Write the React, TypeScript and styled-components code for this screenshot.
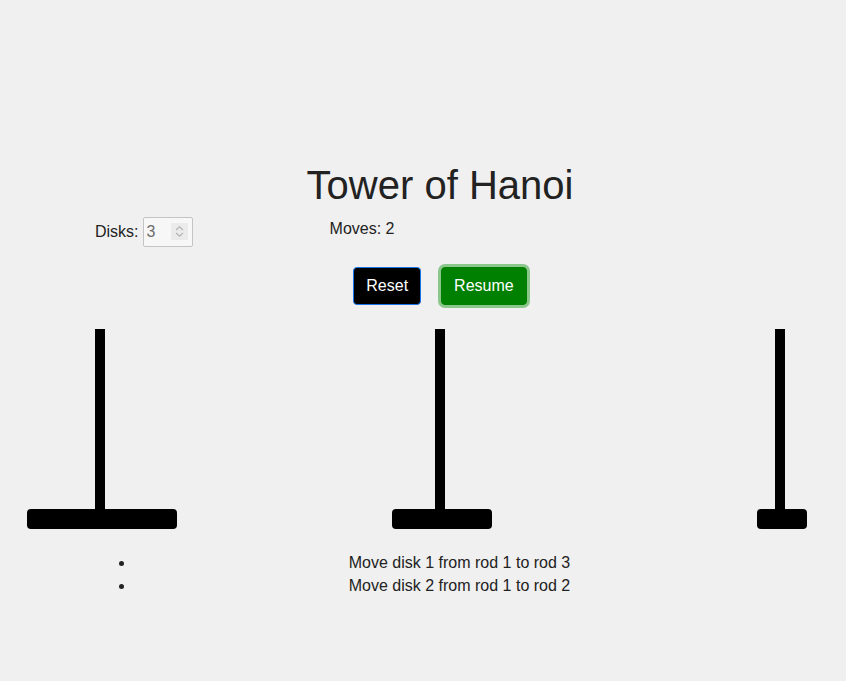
import React from "react";
import styled, { createGlobalStyle } from "styled-components";

const GlobalStyle = createGlobalStyle`
  html, body {
    margin: 0;
    padding: 0;
    background: #f0f0f0;
    overflow: hidden;
  }
  body {
    font-family: "Liberation Sans", Arial, sans-serif;
    color: #222222;
  }
`;

const Page = styled.div`
  width: 880px;
  padding-top: 162px;
  display: flex;
  flex-direction: column;
`;

const Title = styled.h1`
  margin: 0;
  font-size: 40px;
  font-weight: 400;
  line-height: 46px;
  text-align: center;
  color: #222222;
`;

const ControlRow = styled.div`
  display: flex;
  align-items: flex-start;
  margin-top: 9px;
  padding-left: 95px;
  font-size: 16px;
`;

const Field = styled.label`
  display: flex;
  align-items: baseline;
  gap: 4px;
  line-height: 18px;
`;

const InputWrap = styled.span`
  position: relative;
  display: inline-flex;
`;

const NumberInput = styled.input`
  box-sizing: border-box;
  width: 50px;
  height: 30px;
  padding: 1px 3px;
  font-family: "Liberation Sans", Arial, sans-serif;
  font-size: 16px;
  color: #6d6d6d;
  background: #f7f7f7;
  border: 1px solid #c4c4c4;
  border-radius: 2px;
  -moz-appearance: textfield;

  &::-webkit-inner-spin-button,
  &::-webkit-outer-spin-button {
    -webkit-appearance: none;
    margin: 0;
    display: none;
  }
`;

const Spinner = styled.span`
  position: absolute;
  top: 6px;
  right: 5px;
  width: 17px;
  height: 17px;
  display: flex;
  align-items: center;
  justify-content: center;
  background: #ebebeb;
  pointer-events: none;
`;

const Moves = styled.div`
  margin-left: 137px;
  margin-top: 3px;
  line-height: 18px;
`;

const ButtonRow = styled.div`
  display: flex;
  justify-content: center;
  gap: 20px;
  margin-top: 20px;
`;

const Button = styled.button<{ $variant: "dark" | "green" }>`
  height: 38px;
  padding: 0 12px;
  font-family: "Liberation Sans", Arial, sans-serif;
  font-size: 16px;
  color: #ffffff;
  border-radius: 4px;
  cursor: pointer;
  background: ${(p) => (p.$variant === "dark" ? "#000000" : "#008000")};
  border: 1px solid ${(p) => (p.$variant === "dark" ? "#1a73e8" : "#008000")};
  box-shadow: ${(p) =>
    p.$variant === "green" ? "0 0 0 3px rgba(0, 140, 0, 0.42)" : "none"};
`;

const Towers = styled.div`
  display: flex;
  gap: 140px;
  margin-top: 24px;
`;

const Tower = styled.div`
  position: relative;
  flex: 0 0 200px;
  height: 200px;
  display: flex;
  flex-direction: column-reverse;
  align-items: center;
`;

const Rod = styled.div`
  position: absolute;
  left: 95px;
  top: 0;
  width: 10px;
  height: 200px;
  background: #000000;
`;

const Disk = styled.div<{ $size: number }>`
  position: relative;
  width: ${(p) => p.$size * 50}px;
  height: 20px;
  margin-left: 4px;
  background: #000000;
  border-radius: 4px;
`;

const MoveList = styled.ul`
  margin: 22px 96px 0 95px;
  padding-left: 40px;
  font-size: 16px;
  line-height: 23.3px;
  text-align: center;
`;

const towers: number[][] = [[3], [2], [1]];
const moves = [
  "Move disk 1 from rod 1 to rod 3",
  "Move disk 2 from rod 1 to rod 2",
];

export default function App() {
  return (
    <>
      <GlobalStyle />
      <Page>
        <Title>Tower of Hanoi</Title>
        <ControlRow>
          <Field>
            Disks:
            <InputWrap>
              <NumberInput type="number" value={3} min={1} disabled readOnly />
              <Spinner>
                <svg width="11" height="13" viewBox="0 0 11 13" fill="none">
                  <path
                    d="M2 5 L5.5 1.8 L9 5 M2 8 L5.5 11.2 L9 8"
                    stroke="#b4b4b4"
                    strokeWidth="1.2"
                  />
                </svg>
              </Spinner>
            </InputWrap>
          </Field>
          <Moves>Moves: {moves.length}</Moves>
        </ControlRow>
        <ButtonRow>
          <Button $variant="dark">Reset</Button>
          <Button $variant="green">Resume</Button>
        </ButtonRow>
        <Towers>
          {towers.map((disks, i) => (
            <Tower key={i}>
              <Rod />
              {disks.map((d) => (
                <Disk key={d} $size={d} />
              ))}
            </Tower>
          ))}
        </Towers>
        <MoveList>
          {moves.map((m) => (
            <li key={m}>{m}</li>
          ))}
        </MoveList>
      </Page>
    </>
  );
}
